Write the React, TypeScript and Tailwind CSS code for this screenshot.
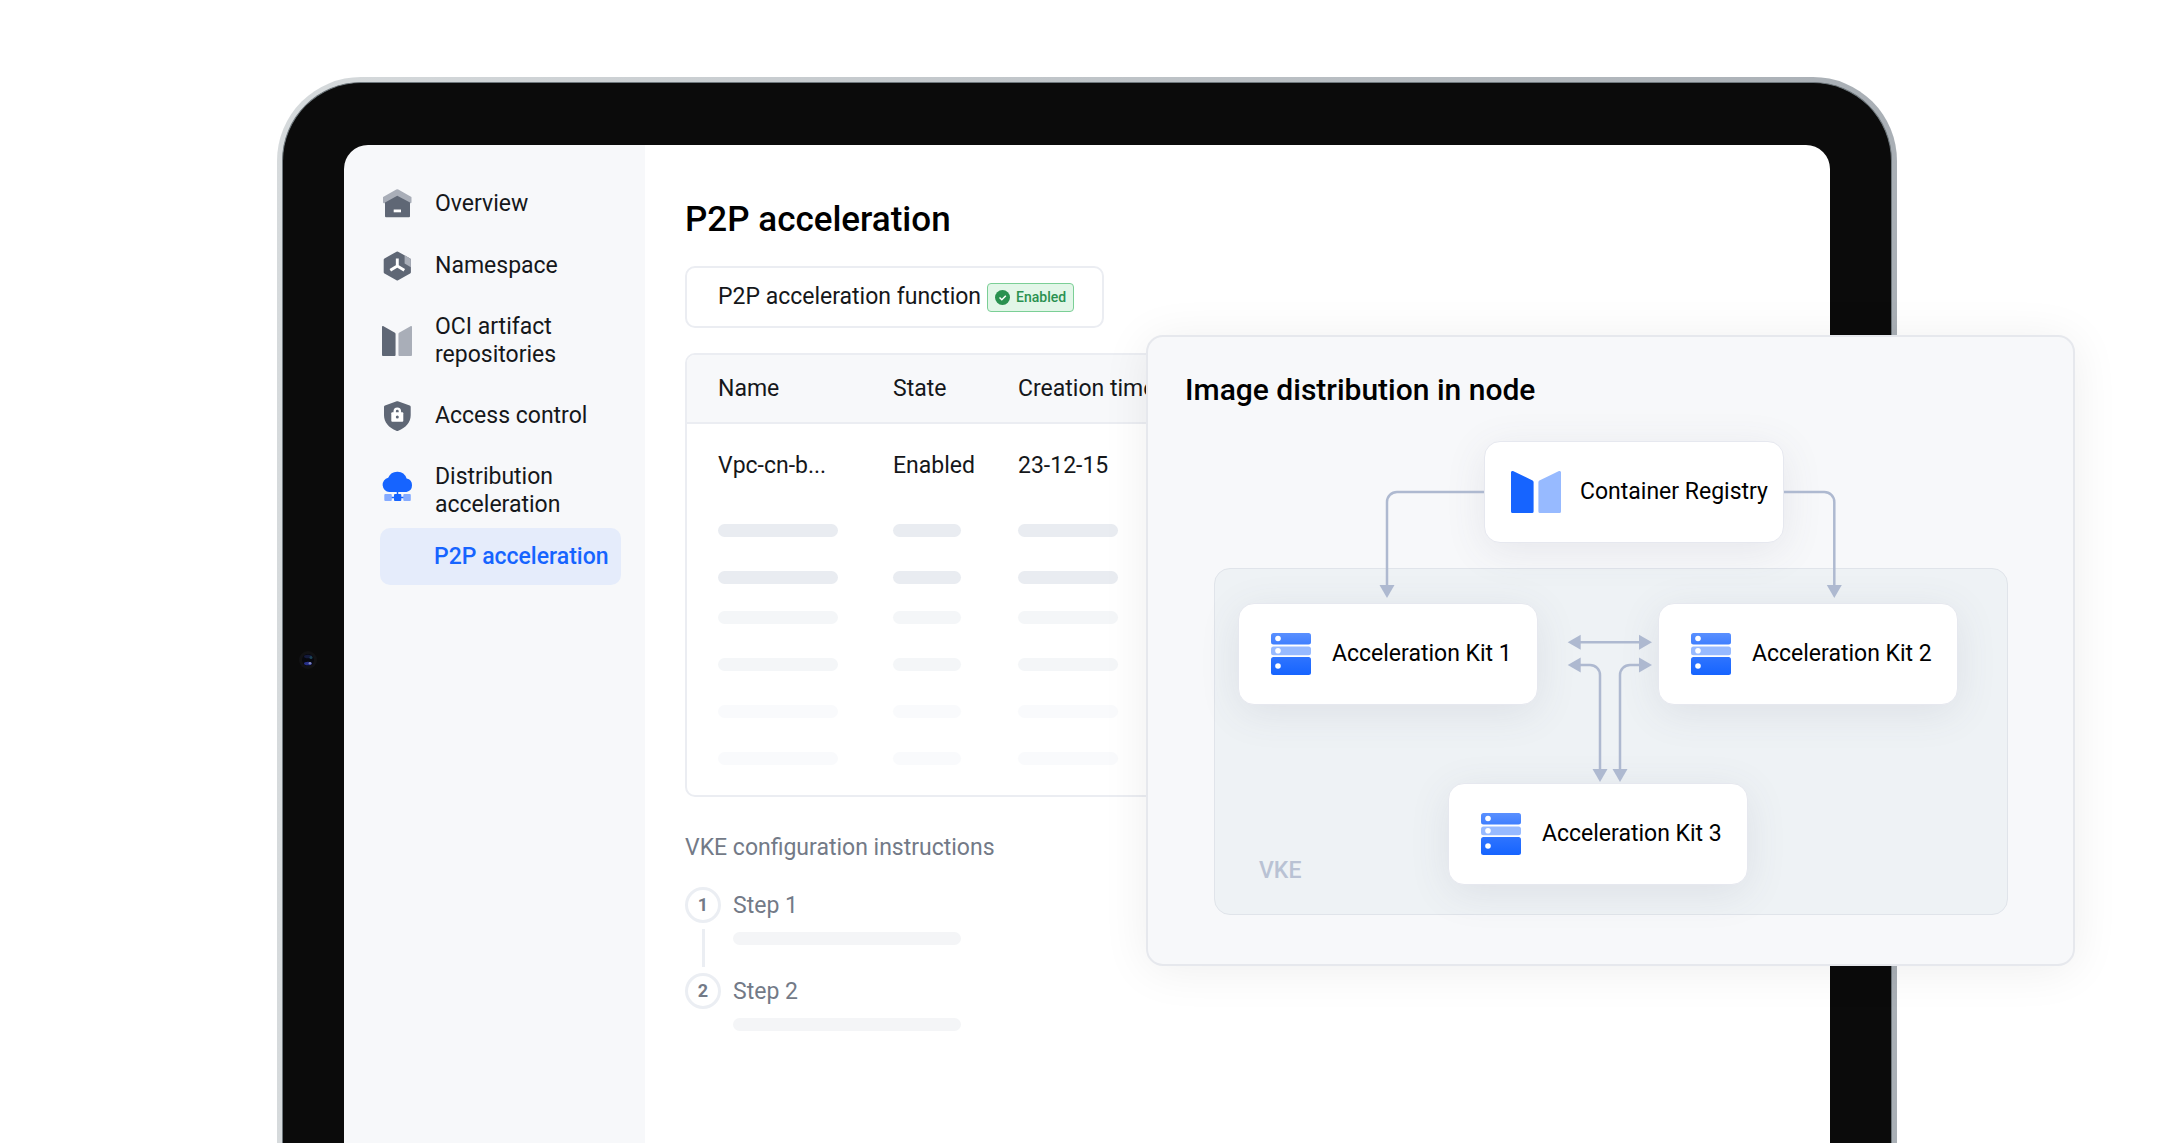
import type { ReactNode } from "react";

const BLUE = "#1664ff";
const SLATE = "#5f6775";
const SLATE_SOFT = "#a9aeb8";

function HouseIcon() {
  return (
    <svg width="30" height="30" viewBox="0 0 30 30" aria-hidden="true">
      <path
        d="M14.3.6a2 2 0 0 1 2 0L29 7.700a1 1 0 0 1 .5.9V13.200a1 1 0 0 1-1 1H2a1 1 0 0 1-1-1V8.600a1 1 0 0 1 .5-.9z"
        fill={SLATE_SOFT}
      />
      <path
        d="M15.300 6.700 28 13.600V27.200a1 1 0 0 1-1 1H4a1 1 0 0 1-1-1V13.600z"
        fill={SLATE}
      />
      <rect x="11.700" y="20.500" width="7.300" height="2.800" fill="#fff" />
    </svg>
  );
}

function HexIcon() {
  return (
    <svg width="30" height="30" viewBox="0 0 30 30" aria-hidden="true">
      <path
        d="M14.500.7a1.600 1.600 0 0 1 1.600 0l12 6.700a1.500 1.500 0 0 1 .8 1.300v12.600a1.500 1.500 0 0 1-.8 1.300l-12 6.700a1.600 1.600 0 0 1-1.600 0l-12-6.700a1.500 1.500 0 0 1-.8-1.300V8.700a1.500 1.500 0 0 1 .8-1.300z"
        fill={SLATE}
      />
      <path
        d="m22.600 4.300 5.500 3.100a1.500 1.500 0 0 1 .8 1.300v7.500l-6.300-3.700z"
        fill={SLATE_SOFT}
      />
      <path
        d="M15.300 7.500v7.800M15.300 15l-7 4.200M15.300 15l7 4.200"
        stroke="#fff"
        strokeWidth="2.900"
        fill="none"
      />
    </svg>
  );
}

function BookIcon({
  width,
  height,
  left,
  right,
}: {
  width: number;
  height: number;
  left: string;
  right: string;
}) {
  return (
    <svg
      width={width}
      height={height}
      viewBox="0 0 50 42"
      preserveAspectRatio="none"
      aria-hidden="true"
    >
      <path
        d="M0 1.500C0 .3 1.300-.3 2.500.3L21.600 9.500a2 2 0 0 1 1 1.600V40.500a1.500 1.500 0 0 1-1.500 1.500H1.500A1.500 1.500 0 0 1 0 40.500z"
        fill={left}
      />
      <path
        d="M50 1.500c0-1.200-1.300-1.800-2.500-1.200L28.400 9.500a2 2 0 0 0-1 1.600V40.500a1.500 1.500 0 0 0 1.500 1.500H48.500a1.500 1.500 0 0 0 1.500-1.500z"
        fill={right}
      />
    </svg>
  );
}

function ShieldIcon() {
  return (
    <svg width="30" height="30" viewBox="0 0 30 30" aria-hidden="true">
      <path
        d="M14.700.3a2 2 0 0 1 1.200 0l11.800 4.200a1.600 1.600 0 0 1 1 1.500v8.200c0 7-5 12.600-12.400 15.500a2.600 2.600 0 0 1-2 0C7 26.800 2 21.200 2 14.200V6a1.600 1.600 0 0 1 1-1.500z"
        fill={SLATE}
      />
      <path
        d="M12.700 12v-1.800a2.600 2.600 0 0 1 5.200 0V12"
        stroke="#fff"
        strokeWidth="2.400"
        fill="none"
      />
      <rect x="9.300" y="11.200" width="12" height="9.600" rx="1" fill="#fff" />
      <circle cx="15.300" cy="16" r="1.500" fill={SLATE} />
    </svg>
  );
}

// Drawn in the top 30px of a taller box so it lines up with the first text line.
function CloudIcon() {
  return (
    <svg width="32" height="40" viewBox="0 0 32 40" aria-hidden="true">
      <path
        d="M7.300 21A7.200 7.200 0 0 1 6.200 6.800 9.800 9.800 0 0 1 24.600 7.500 6.900 6.900 0 0 1 24.500 21z"
        fill={BLUE}
      />
      <path d="M9 26.500h14M15.500 20v4" stroke={BLUE} strokeWidth="1.500" />
      <rect x="2.300" y="23" width="7.500" height="7" rx="1" fill="#85abff" />
      <rect x="21.300" y="23" width="7.500" height="7" rx="1" fill="#85abff" />
      <rect x="12" y="23" width="7.300" height="7" rx="1" fill={BLUE} />
    </svg>
  );
}

function ServerIcon() {
  return (
    <svg width="40" height="42" viewBox="0 0 40 42" aria-hidden="true">
      <defs>
        <linearGradient id="rack-top" x1="0" y1="0" x2="0" y2="1">
          <stop offset="0" stopColor="#5a90ff" />
          <stop offset="1" stopColor="#3f7fff" />
        </linearGradient>
        <linearGradient id="rack-bottom" x1="0" y1="0" x2="0" y2="1">
          <stop offset="0" stopColor="#2e74ff" />
          <stop offset="1" stopColor="#1664ff" />
        </linearGradient>
      </defs>
      <rect y="0" width="40" height="11.500" rx="2.500" fill="url(#rack-top)" />
      <rect y="13.500" width="40" height="8.800" rx="2.500" fill="#97baff" />
      <rect y="24" width="40" height="18" rx="2.500" fill="url(#rack-bottom)" />
      <circle cx="7" cy="5.500" r="2.800" fill="#fff" />
      <circle cx="7" cy="17.800" r="2.800" fill="#fff" />
      <circle cx="7" cy="33" r="2.800" fill="#fff" />
    </svg>
  );
}

const NAV = [
  { label: "Overview", icon: <HouseIcon /> },
  { label: "Namespace", icon: <HexIcon /> },
  {
    label: "OCI artifact repositories",
    icon: <BookIcon width={30} height={30} left={SLATE} right={SLATE_SOFT} />,
  },
  { label: "Access control", icon: <ShieldIcon /> },
  { label: "Distribution acceleration", icon: <CloudIcon /> },
];

function Sidebar() {
  return (
    <nav className="w-[301px] shrink-0 bg-[#f7f8fa] pt-11 pr-6 pl-9">
      <ul className="flex flex-col gap-8">
        {NAV.map((item) => (
          <li key={item.label}>
            <a href="#" className="flex items-center gap-[21px] pl-0.5">
              <span className="w-8 shrink-0">{item.icon}</span>
              <span className="w-[160px]">{item.label}</span>
            </a>
          </li>
        ))}
      </ul>
      <a
        href="#"
        aria-current="page"
        className="mt-[9px] flex h-[57px] items-center rounded-[10px] bg-[#e5ecfb] pl-[54px] font-medium whitespace-nowrap text-[#1664ff]"
      >
        P2P acceleration
      </a>
    </nav>
  );
}

const BAR_ROWS = [
  { pad: "pt-[17px]", tone: "bg-[#e9ecf1]" },
  { pad: "pt-[34px]", tone: "bg-[#e9ecf1]" },
  { pad: "pt-[27px]", tone: "bg-[#f4f6f8]" },
  { pad: "pt-[34px]", tone: "bg-[#f4f6f8]" },
  { pad: "pt-[34px]", tone: "bg-[#f9fafc]" },
  { pad: "pt-[34px]", tone: "bg-[#f9fafc]" },
];

const BAR_WIDTHS = ["w-[120px]", "w-[68px]", "w-[100px]"];

function InstanceTable() {
  return (
    <div className="mt-[25px] overflow-hidden rounded-[10px] border-2 border-[#ebedf2] pb-[30px]">
      <table className="w-full table-fixed border-collapse text-left">
        <colgroup>
          <col className="w-[175px]" />
          <col className="w-[125px]" />
          <col />
        </colgroup>
        <thead>
          <tr className="h-[69px] bg-[#f7f8fa] shadow-[inset_0_-2px_0_#ebedf2]">
            <th className="pb-0.5 pl-[31px] font-normal">Name</th>
            <th className="pb-0.5 pl-[31px] font-normal">State</th>
            <th className="pb-0.5 pl-[31px] font-normal">Creation time</th>
          </tr>
        </thead>
        <tbody>
          <tr className="h-[83px]">
            <td className="pl-[31px]">Vpc-cn-b...</td>
            <td className="pl-[31px]">Enabled</td>
            <td className="pl-[31px]">23-12-15</td>
          </tr>
          {BAR_ROWS.map((row, i) => (
            <tr key={i}>
              {BAR_WIDTHS.map((width) => (
                <td key={width} className={`pl-[31px] ${row.pad}`}>
                  <div className={`h-[13px] rounded-full ${width} ${row.tone}`} />
                </td>
              ))}
            </tr>
          ))}
        </tbody>
      </table>
    </div>
  );
}

function Step({ n, last }: { n: number; last?: boolean }) {
  return (
    <li className="flex gap-3">
      <div className="flex flex-col items-center gap-1.5">
        <span className="flex size-9 items-center justify-center rounded-full border-3 border-[#ebeef3] text-[18px] font-bold">
          {n}
        </span>
        {!last && <span className="mb-1.5 h-[38px] w-[3px] bg-[#ebeef3]" />}
      </div>
      <div className="pt-[5px]">
        <div>Step {n}</div>
        <div className="mt-3 h-[13px] w-[228px] rounded-full bg-[#f4f5f7]" />
      </div>
    </li>
  );
}

function Content() {
  return (
    <main className="min-w-0 flex-1 bg-white px-10 pt-[55px]">
      <h1 className="text-[35px] leading-[40px] font-medium text-black">
        P2P acceleration
      </h1>
      <div className="mt-[26px] flex h-[62px] w-fit items-center gap-1.5 rounded-[10px] border-2 border-[#ebedf2] pr-7 pl-[31px]">
        <span className="whitespace-nowrap">P2P acceleration function</span>
        <span className="flex h-[29px] items-center gap-1.5 rounded-[4px] border border-[#7bcf96] bg-[#e2f6e8] px-[7px] text-[14px] font-medium text-[#2a9150]">
          <svg width="15" height="15" viewBox="0 0 15 15" aria-hidden="true">
            <circle cx="7.500" cy="7.500" r="7.500" fill="#2a9150" />
            <path
              d="m4.500 7.500 2.300 2.200 4-4"
              stroke="#fff"
              strokeWidth="1.500"
              fill="none"
            />
          </svg>
          Enabled
        </span>
      </div>
      <InstanceTable />
      <section className="mt-[37px] text-[#737a87]">
        <h2>VKE configuration instructions</h2>
        <ol className="mt-[25px]">
          <Step n={1} />
          <Step n={2} last />
        </ol>
      </section>
    </main>
  );
}

function Node({
  place,
  icon,
  label,
}: {
  place: string;
  icon: ReactNode;
  label: string;
}) {
  return (
    <div
      className={`absolute flex h-[102px] w-[300px] items-center rounded-[16px] border border-[#e6e8ef] bg-white whitespace-nowrap shadow-[0_8px_40px_rgba(80,80,110,0.10)] ${place}`}
    >
      {icon}
      {label}
    </div>
  );
}

function Arrows() {
  return (
    <svg
      className="absolute inset-0"
      width="851"
      height="516"
      viewBox="0 0 851 516"
      aria-hidden="true"
    >
      <g stroke="#aeb9d0" strokeWidth="2.500" fill="none">
        <path d="M299 84H212a10 10 0 0 0-10 10V178" />
        <path d="M599 84H639.300a10 10 0 0 1 10 10V178" />
        <path d="M394 234.300H456" />
        <path d="M394 257h11a10 10 0 0 1 10 10v96" />
        <path d="M456 257h-11a10 10 0 0 0-10 10v96" />
      </g>
      <g fill="#aeb9d0">
        <path d="M194.500 177h15L202 190z" />
        <path d="M641.800 177h15L649.300 190z" />
        <path d="M395.700 226.800v15L382.700 234.300z" />
        <path d="M454 226.800v15L467 234.300z" />
        <path d="M395.700 249.500v15L382.700 257z" />
        <path d="M454 249.500v15L467 257z" />
        <path d="M407.500 361h15L415 374z" />
        <path d="M427.500 361h15L435 374z" />
      </g>
    </svg>
  );
}

function DistributionCard() {
  return (
    <section className="absolute top-[335px] right-[105px] w-[929px] rounded-[17px] border-2 border-[#e6e8ed] bg-[#f7f8fa] px-[37px] pt-[35px] pb-10 text-black shadow-[0_4px_48px_rgba(0,0,0,0.07)]">
      <h2 className="text-[30px] leading-[36px] font-medium">
        Image distribution in node
      </h2>
      <div className="relative h-[516px]">
        <div className="absolute top-[160px] left-[29px] flex h-[347px] w-[794px] items-end rounded-[16px] border border-[#e0e4ea] bg-[#eef2f5] pb-[29px] pl-[44px] font-medium text-[#b9c2d4]">
          VKE
        </div>
        <Node
          place="top-[33px] left-[299px] gap-[19px] pl-[26px]"
          icon={<BookIcon width={50} height={42} left={BLUE} right="#97baff" />}
          label="Container Registry"
        />
        <Node
          place="top-[195px] left-[53px] gap-[21px] pl-8"
          icon={<ServerIcon />}
          label="Acceleration Kit 1"
        />
        <Node
          place="top-[195px] left-[473px] gap-[21px] pl-8"
          icon={<ServerIcon />}
          label="Acceleration Kit 2"
        />
        <Node
          place="top-[375px] left-[263px] gap-[21px] pl-8"
          icon={<ServerIcon />}
          label="Acceleration Kit 3"
        />
        <Arrows />
      </div>
    </section>
  );
}

function Camera() {
  return (
    <svg
      className="absolute top-[574px] left-[22px]"
      width="18"
      height="18"
      viewBox="0 0 18 18"
      aria-hidden="true"
    >
      <circle cx="9" cy="9" r="9" fill="#121214" />
      <circle cx="9" cy="9" r="6" fill="#07080f" />
      <ellipse cx="9" cy="5.500" rx="4" ry="1.800" fill="#141a3c" />
      <circle cx="12" cy="6.500" r="1.500" fill="#1c4356" />
      <ellipse cx="9" cy="12.500" rx="4" ry="1.800" fill="#27308a" />
      <circle cx="11" cy="12.300" r="1.300" fill="#7f86b8" />
    </svg>
  );
}

export default function App() {
  return (
    <div className="relative flex min-h-screen flex-col bg-white pt-[77px] pr-[283px] pl-[277px] font-['Roboto',sans-serif] text-[23px] leading-[28px] text-[#15171a]">
      <div className="relative flex flex-1 flex-col rounded-t-[84px] bg-linear-to-r from-[#d6dadc] to-[#a9afb5] px-[5px] pt-[5px]">
        <div className="flex flex-1 flex-col rounded-t-[79px] border border-b-0 border-[#6f787d] bg-[#0b0b0b] px-[61px] pt-[62px]">
          <div className="flex flex-1 overflow-hidden rounded-t-[24px]">
            <Sidebar />
            <Content />
          </div>
        </div>
        <Camera />
      </div>
      <DistributionCard />
    </div>
  );
}
